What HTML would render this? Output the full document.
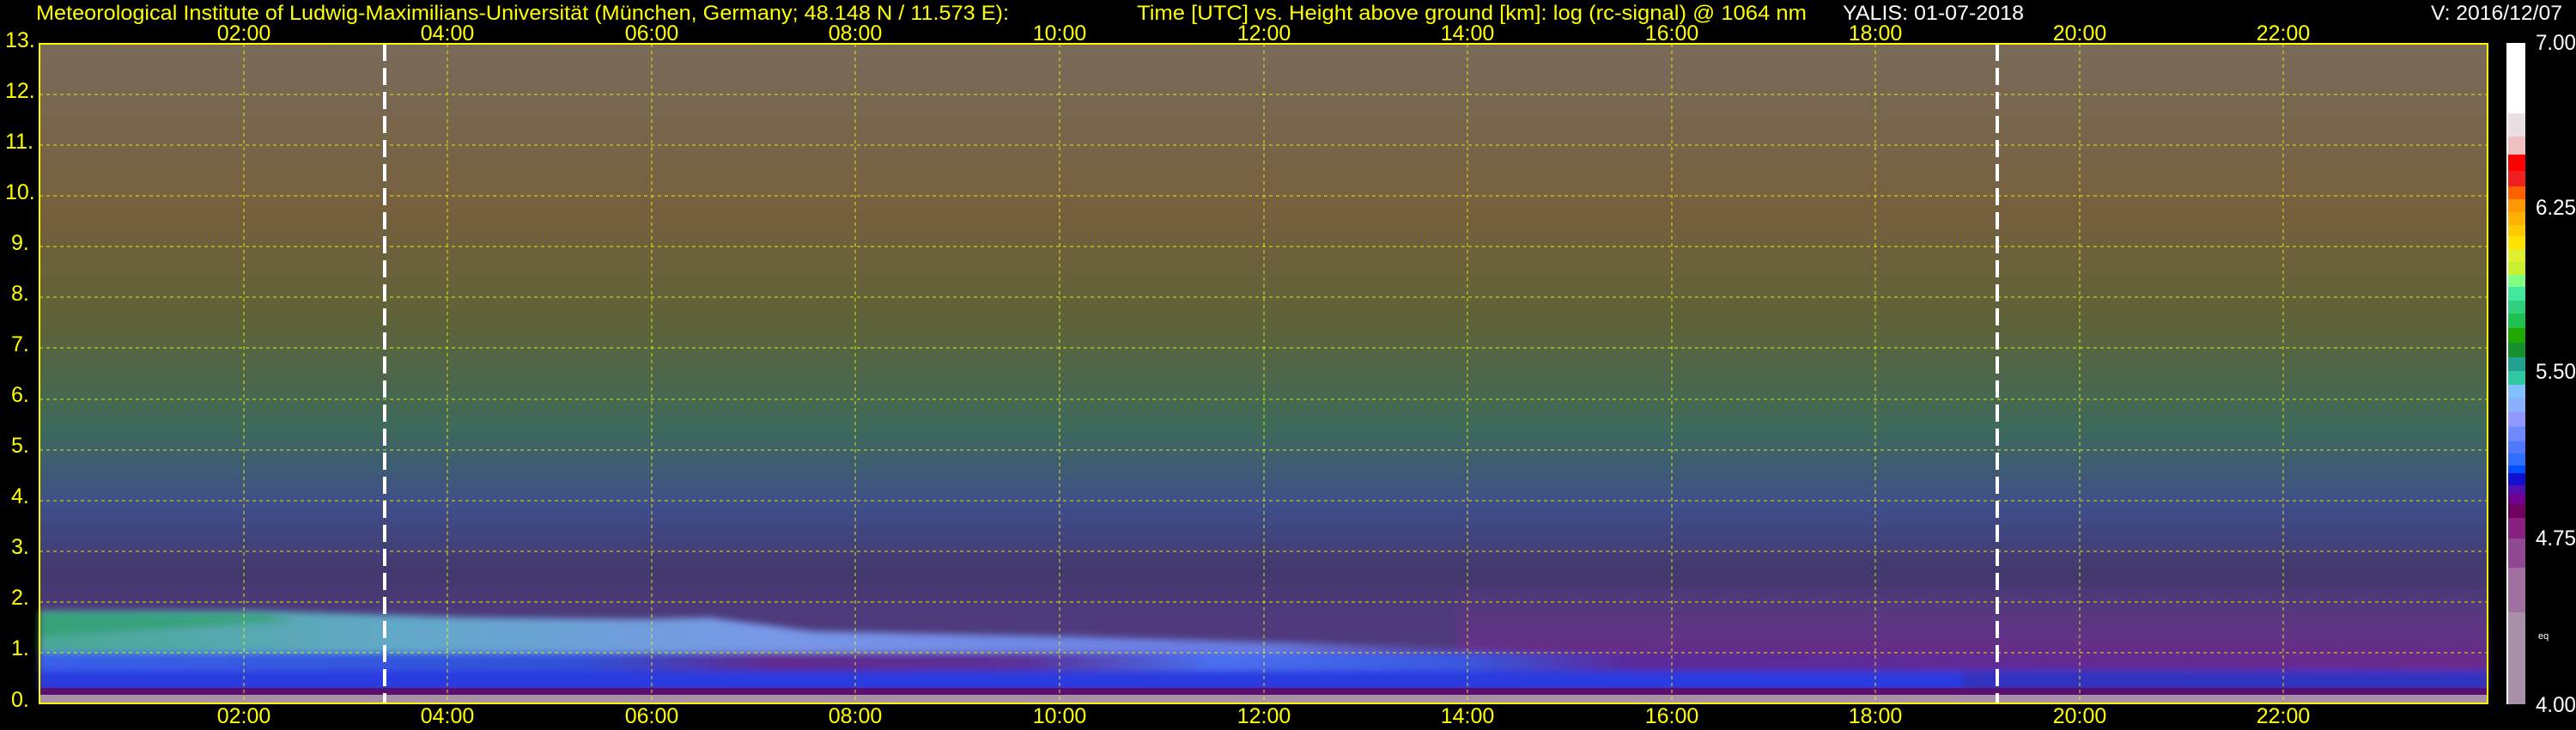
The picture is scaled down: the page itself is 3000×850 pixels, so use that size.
<!DOCTYPE html>
<html><head><meta charset="utf-8"><style>
html,body{margin:0;padding:0;background:#000;width:3000px;height:850px;overflow:hidden}
svg{display:block}
text{font-family:"Liberation Sans",Arial,sans-serif}
</style></head><body>
<svg width="3000" height="850" viewBox="0 0 3000 850" xmlns="http://www.w3.org/2000/svg">
<defs>
<linearGradient id="up" x1="0" y1="0" x2="0" y2="1">
<stop offset="0" stop-color="#7a6a5a"/>
<stop offset="0.25" stop-color="#76603e"/>
<stop offset="0.42" stop-color="#5e6238"/>
<stop offset="0.58" stop-color="#3e6a5a"/>
<stop offset="0.70" stop-color="#3f4f8a"/>
<stop offset="0.80" stop-color="#43386e"/>
<stop offset="0.87" stop-color="#4e3a7c"/>
<stop offset="1" stop-color="#4e3a7c"/>
</linearGradient>
<linearGradient id="bl" x1="0" y1="0" x2="1700" y2="0" gradientUnits="userSpaceOnUse">
<stop offset="0" stop-color="#4aa894"/>
<stop offset="0.25" stop-color="#62a8c8"/>
<stop offset="0.5" stop-color="#7898e8"/>
<stop offset="0.85" stop-color="#6878e0"/>
<stop offset="1" stop-color="#5a3a9a" stop-opacity="0.6"/>
</linearGradient>
<linearGradient id="lo" x1="0" y1="0" x2="2851" y2="0" gradientUnits="userSpaceOnUse">
<stop offset="0" stop-color="#3a60e8"/>
<stop offset="0.22" stop-color="#3050d8"/>
<stop offset="0.3" stop-color="#602a90"/>
<stop offset="0.4" stop-color="#5a3098"/>
<stop offset="0.48" stop-color="#4a70f0"/>
<stop offset="0.58" stop-color="#3a58e0"/>
<stop offset="0.65" stop-color="#5a2a9a"/>
<stop offset="1" stop-color="#6a2a8a"/>
</linearGradient>
<linearGradient id="rp" x1="0" y1="0" x2="0" y2="1">
<stop offset="0" stop-color="#6a3a8a" stop-opacity="0"/>
<stop offset="1" stop-color="#6a2a8a" stop-opacity="0.9"/>
</linearGradient>
<filter id="bf" x="-5%" y="-50%" width="110%" height="200%"><feGaussianBlur stdDeviation="4"/></filter>
</defs>

<text x="42" y="23" font-size="24" fill="#ffff00" textLength="1133" lengthAdjust="spacingAndGlyphs">Meteorological Institute of Ludwig-Maximilians-Universität (München, Germany; 48.148 N / 11.573 E):</text>
<text x="1324" y="23" font-size="24" fill="#ffff00" textLength="780" lengthAdjust="spacingAndGlyphs">Time [UTC] vs. Height above ground [km]: log (rc-signal) @ 1064 nm</text>
<text x="2146" y="23" font-size="24" fill="#ffffff" textLength="211" lengthAdjust="spacingAndGlyphs">YALIS: 01-07-2018</text>
<text x="2831" y="23" font-size="24" fill="#ffffff" textLength="153" lengthAdjust="spacingAndGlyphs">V: 2016/12/07</text>

<g transform="translate(46,51)">
<rect x="0" y="0" width="2851" height="768" fill="url(#up)"/>
<g filter="url(#bf)">
<rect x="1650" y="630" width="1201" height="80" fill="url(#rp)"/>
<polygon points="0,660 250,660 500,668 700,670 780,668 900,684 1200,690 1550,700 1720,706 1720,712 0,712" fill="url(#bl)"/>
<polygon points="0,664 260,664 300,672 0,690" fill="#30a070" opacity="0.8"/>
<rect x="0" y="709" width="2851" height="24" fill="url(#lo)"/>
<rect x="0" y="730" width="2851" height="24" fill="#2a3ae0"/>
<rect x="2240" y="732" width="611" height="22" fill="#3a2aa8" opacity="0.6"/>
</g>
<rect x="0" y="750" width="2851" height="8" fill="#5a1070"/>
<rect x="0" y="758" width="2851" height="10" fill="#a890a8"/>

<g stroke="#ffff00" stroke-width="1" stroke-dasharray="4 4" opacity="0.85">
<line x1="0" y1="59" x2="2851" y2="59"/><line x1="0" y1="118" x2="2851" y2="118"/>
<line x1="0" y1="177" x2="2851" y2="177"/><line x1="0" y1="236" x2="2851" y2="236"/>
<line x1="0" y1="295" x2="2851" y2="295"/><line x1="0" y1="354" x2="2851" y2="354"/>
<line x1="0" y1="414" x2="2851" y2="414"/><line x1="0" y1="473" x2="2851" y2="473"/>
<line x1="0" y1="532" x2="2851" y2="532"/><line x1="0" y1="591" x2="2851" y2="591"/>
<line x1="0" y1="650" x2="2851" y2="650"/><line x1="0" y1="709" x2="2851" y2="709"/>
<line x1="238" y1="0" x2="238" y2="768"/><line x1="475" y1="0" x2="475" y2="768"/>
<line x1="713" y1="0" x2="713" y2="768"/><line x1="950" y1="0" x2="950" y2="768"/>
<line x1="1188" y1="0" x2="1188" y2="768"/><line x1="1426" y1="0" x2="1426" y2="768"/>
<line x1="1663" y1="0" x2="1663" y2="768"/><line x1="1901" y1="0" x2="1901" y2="768"/>
<line x1="2138" y1="0" x2="2138" y2="768"/><line x1="2376" y1="0" x2="2376" y2="768"/>
<line x1="2613" y1="0" x2="2613" y2="768"/>
</g>
<g stroke="#ffffff" stroke-width="4" stroke-dasharray="20 8">
<line x1="402" y1="0" x2="402" y2="768"/>
<line x1="2280" y1="0" x2="2280" y2="768"/>
</g>
<rect x="0" y="0" width="2851" height="768" fill="none" stroke="#ffff00" stroke-width="2"/>
</g>

<g font-size="25" fill="#ffff00">
<text x="6" y="55">13.</text><text x="6" y="114">12.</text><text x="6" y="173">11.</text>
<text x="6" y="232">10.</text><text x="13" y="291">9.</text><text x="13" y="350">8.</text>
<text x="13" y="409">7.</text><text x="13" y="468">6.</text><text x="13" y="527">5.</text>
<text x="13" y="586">4.</text><text x="13" y="645">3.</text><text x="13" y="704">2.</text>
<text x="13" y="763">1.</text><text x="13" y="823">0.</text>
</g>
<g font-size="25" fill="#ffff00" text-anchor="middle">
<text x="284" y="47">02:00</text><text x="521" y="47">04:00</text><text x="759" y="47">06:00</text>
<text x="996" y="47">08:00</text><text x="1234" y="47">10:00</text><text x="1472" y="47">12:00</text>
<text x="1709" y="47">14:00</text><text x="1947" y="47">16:00</text><text x="2184" y="47">18:00</text>
<text x="2422" y="47">20:00</text><text x="2659" y="47">22:00</text>
<text x="284" y="842">02:00</text><text x="521" y="842">04:00</text><text x="759" y="842">06:00</text>
<text x="996" y="842">08:00</text><text x="1234" y="842">10:00</text><text x="1472" y="842">12:00</text>
<text x="1709" y="842">14:00</text><text x="1947" y="842">16:00</text><text x="2184" y="842">18:00</text>
<text x="2422" y="842">20:00</text><text x="2659" y="842">22:00</text>
</g>

<g>
<rect x="2920" y="50" width="21" height="82" fill="#ffffff"/>
<rect x="2920" y="132" width="21" height="27" fill="#e8e0e0"/>
<rect x="2920" y="159" width="21" height="21" fill="#f0c0c0"/>
<rect x="2920" y="180" width="21" height="19" fill="#ff0000"/>
<rect x="2920" y="199" width="21" height="18" fill="#f02020"/>
<rect x="2920" y="217" width="21" height="15" fill="#ff6000"/>
<rect x="2920" y="232" width="21" height="15" fill="#ff9800"/>
<rect x="2920" y="247" width="21" height="15" fill="#ffb000"/>
<rect x="2920" y="262" width="21" height="13" fill="#ffc800"/>
<rect x="2920" y="275" width="21" height="15" fill="#ffe000"/>
<rect x="2920" y="290" width="21" height="15" fill="#e0f030"/>
<rect x="2920" y="305" width="21" height="15" fill="#c8f030"/>
<rect x="2920" y="320" width="21" height="14" fill="#80ff80"/>
<rect x="2920" y="334" width="21" height="16" fill="#40e8a0"/>
<rect x="2920" y="350" width="21" height="15" fill="#30d080"/>
<rect x="2920" y="365" width="21" height="17" fill="#20c050"/>
<rect x="2920" y="382" width="21" height="17" fill="#20a800"/>
<rect x="2920" y="399" width="21" height="17" fill="#189030"/>
<rect x="2920" y="416" width="21" height="16" fill="#20a090"/>
<rect x="2920" y="432" width="21" height="16" fill="#30c8a0"/>
<rect x="2920" y="448" width="21" height="15" fill="#80c0ff"/>
<rect x="2920" y="463" width="21" height="17" fill="#88b0ff"/>
<rect x="2920" y="480" width="21" height="17" fill="#9098ff"/>
<rect x="2920" y="497" width="21" height="17" fill="#7088ff"/>
<rect x="2920" y="514" width="21" height="14" fill="#5078ff"/>
<rect x="2920" y="528" width="21" height="14" fill="#3070ff"/>
<rect x="2920" y="542" width="21" height="9" fill="#0050ff"/>
<rect x="2920" y="551" width="21" height="14" fill="#1010d0"/>
<rect x="2920" y="565" width="21" height="10" fill="#5010b0"/>
<rect x="2920" y="575" width="21" height="12" fill="#700090"/>
<rect x="2920" y="587" width="21" height="16" fill="#700060"/>
<rect x="2920" y="603" width="21" height="24" fill="#882080"/>
<rect x="2920" y="627" width="21" height="34" fill="#904890"/>
<rect x="2920" y="661" width="21" height="52" fill="#a070a0"/>
<rect x="2920" y="713" width="21" height="107" fill="#a890a8"/>
<line x1="2920" y1="50" x2="2920" y2="820" stroke="#ffffff" stroke-width="2"/>
</g>
<g font-size="25" fill="#ffffff">
<text x="2953" y="58" textLength="47" lengthAdjust="spacingAndGlyphs">7.00</text>
<text x="2953" y="250" textLength="47" lengthAdjust="spacingAndGlyphs">6.25</text>
<text x="2953" y="441" textLength="47" lengthAdjust="spacingAndGlyphs">5.50</text>
<text x="2953" y="635" textLength="47" lengthAdjust="spacingAndGlyphs">4.75</text>
<text x="2953" y="829" textLength="47" lengthAdjust="spacingAndGlyphs">4.00</text>
<text x="2956" y="744" font-size="11">eq</text>
</g>
</svg>
</body></html>
